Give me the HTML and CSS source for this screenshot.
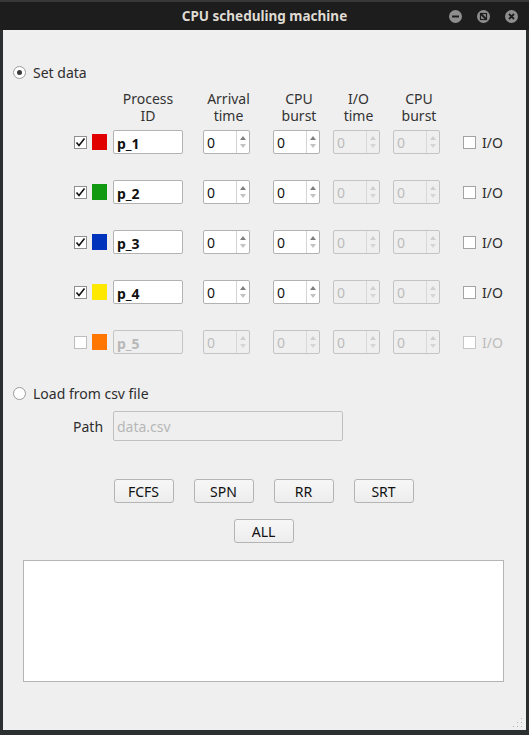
FILE: index.html
```html
<!DOCTYPE html>
<html>
<head>
<meta charset="utf-8">
<link rel="stylesheet" href="styles.css">
</head>
<body>
<div class="frame">
  <div class="titlebar">
    <span class="title">CPU scheduling machine</span>
    <div class="wbtns">
      <svg class="wbtn" width="13" height="13" viewBox="0 0 13 13"><circle cx="6.5" cy="6.5" r="6.5" fill="#8e8e8e"/><rect x="3" y="5.5" width="7" height="2" fill="#1e1e1e"/></svg>
      <svg class="wbtn" width="13" height="13" viewBox="0 0 13 13"><circle cx="6.5" cy="6.5" r="6.5" fill="#8e8e8e"/><rect x="3.5" y="3.5" width="6" height="6" fill="none" stroke="#1e1e1e" stroke-width="1.2"/><line x1="3.5" y1="3.5" x2="9.5" y2="9.5" stroke="#1e1e1e" stroke-width="2"/></svg>
      <svg class="wbtn" width="13" height="13" viewBox="0 0 13 13"><circle cx="6.5" cy="6.5" r="6.5" fill="#8e8e8e"/><path d="M4 4L9 9M9 4L4 9" stroke="#1e1e1e" stroke-width="1.8"/></svg>
    </div>
  </div>
  <div class="content">
    <label class="radio-row first">
      <span class="radio checked"></span><span>Set data</span>
    </label>

    <div class="table">
      <div class="thead">
        <div class="hd c3">Process<br>ID</div>
        <div class="hd c4">Arrival<br>time</div>
        <div class="hd c5">CPU<br>burst</div>
        <div class="hd c6">I/O<br>time</div>
        <div class="hd c7">CPU<br>burst</div>
      </div>

      <div class="trow">
        <span class="chk on"><svg width="11" height="11" viewBox="0 0 11 11"><path d="M1.5 5.5L4 8.5L9.5 1.5" fill="none" stroke="#111" stroke-width="1.6"/></svg></span>
        <span class="sw" style="background:#e00000"></span>
        <div class="field"><b>p_1</b></div>
        <div class="spin"><span class="val">0</span><span class="arr"><i class="up"></i><i class="dn"></i></span></div>
        <div class="spin"><span class="val">0</span><span class="arr"><i class="up"></i><i class="dn"></i></span></div>
        <div class="spin dis"><span class="val">0</span><span class="arr"><i class="up"></i><i class="dn"></i></span></div>
        <div class="spin dis"><span class="val">0</span><span class="arr"><i class="up"></i><i class="dn"></i></span></div>
        <label class="io"><span class="chk"></span>I/O</label>
      </div>

      <div class="trow">
        <span class="chk on"><svg width="11" height="11" viewBox="0 0 11 11"><path d="M1.5 5.5L4 8.5L9.5 1.5" fill="none" stroke="#111" stroke-width="1.6"/></svg></span>
        <span class="sw" style="background:#119a11"></span>
        <div class="field"><b>p_2</b></div>
        <div class="spin"><span class="val">0</span><span class="arr"><i class="up"></i><i class="dn"></i></span></div>
        <div class="spin"><span class="val">0</span><span class="arr"><i class="up"></i><i class="dn"></i></span></div>
        <div class="spin dis"><span class="val">0</span><span class="arr"><i class="up"></i><i class="dn"></i></span></div>
        <div class="spin dis"><span class="val">0</span><span class="arr"><i class="up"></i><i class="dn"></i></span></div>
        <label class="io"><span class="chk"></span>I/O</label>
      </div>

      <div class="trow">
        <span class="chk on"><svg width="11" height="11" viewBox="0 0 11 11"><path d="M1.5 5.5L4 8.5L9.5 1.5" fill="none" stroke="#111" stroke-width="1.6"/></svg></span>
        <span class="sw" style="background:#0033bb"></span>
        <div class="field"><b>p_3</b></div>
        <div class="spin"><span class="val">0</span><span class="arr"><i class="up"></i><i class="dn"></i></span></div>
        <div class="spin"><span class="val">0</span><span class="arr"><i class="up"></i><i class="dn"></i></span></div>
        <div class="spin dis"><span class="val">0</span><span class="arr"><i class="up"></i><i class="dn"></i></span></div>
        <div class="spin dis"><span class="val">0</span><span class="arr"><i class="up"></i><i class="dn"></i></span></div>
        <label class="io"><span class="chk"></span>I/O</label>
      </div>

      <div class="trow">
        <span class="chk on"><svg width="11" height="11" viewBox="0 0 11 11"><path d="M1.5 5.5L4 8.5L9.5 1.5" fill="none" stroke="#111" stroke-width="1.6"/></svg></span>
        <span class="sw" style="background:#ffe800"></span>
        <div class="field"><b>p_4</b></div>
        <div class="spin"><span class="val">0</span><span class="arr"><i class="up"></i><i class="dn"></i></span></div>
        <div class="spin"><span class="val">0</span><span class="arr"><i class="up"></i><i class="dn"></i></span></div>
        <div class="spin dis"><span class="val">0</span><span class="arr"><i class="up"></i><i class="dn"></i></span></div>
        <div class="spin dis"><span class="val">0</span><span class="arr"><i class="up"></i><i class="dn"></i></span></div>
        <label class="io"><span class="chk"></span>I/O</label>
      </div>

      <div class="trow">
        <span class="chk off"></span>
        <span class="sw" style="background:#ff7700"></span>
        <div class="field dis"><b>p_5</b></div>
        <div class="spin dis"><span class="val">0</span><span class="arr"><i class="up"></i><i class="dn"></i></span></div>
        <div class="spin dis"><span class="val">0</span><span class="arr"><i class="up"></i><i class="dn"></i></span></div>
        <div class="spin dis"><span class="val">0</span><span class="arr"><i class="up"></i><i class="dn"></i></span></div>
        <div class="spin dis"><span class="val">0</span><span class="arr"><i class="up"></i><i class="dn"></i></span></div>
        <label class="io dis"><span class="chk"></span>I/O</label>
      </div>
    </div>

    <label class="radio-row second">
      <span class="radio"></span><span>Load from csv file</span>
    </label>

    <div class="path-row">
      <span class="path-label">Path</span>
      <div class="path-input">data.csv</div>
    </div>

    <div class="btn-row algos">
      <button class="btn">FCFS</button>
      <button class="btn">SPN</button>
      <button class="btn">RR</button>
      <button class="btn">SRT</button>
    </div>
    <div class="btn-row all">
      <button class="btn">ALL</button>
    </div>

    <div class="output"></div>

    <svg class="grip" width="10" height="10" viewBox="0 0 10 10">
      <rect x="8" y="0" width="1" height="1" fill="#b5b5b5"/>
      <rect x="8" y="4" width="1" height="1" fill="#b5b5b5"/>
      <rect x="4" y="4" width="1" height="1" fill="#b5b5b5"/>
      <rect x="8" y="8" width="1" height="1" fill="#b5b5b5"/>
      <rect x="4" y="8" width="1" height="1" fill="#b5b5b5"/>
      <rect x="0" y="8" width="1" height="1" fill="#b5b5b5"/>
    </svg>
  </div>
</div>
</body>
</html>
```

FILE: styles.css
```css
* { box-sizing: border-box; }
html, body { margin: 0; padding: 0; }
body {
  width: 529px;
  height: 735px;
  background: #2c2f30;
  font-family: "Noto Sans", "Open Sans", sans-serif;
  font-size: 13px;
  color: #333;
  overflow: hidden;
}
.frame {
  width: 529px;
  height: 735px;
  display: flex;
  flex-direction: column;
}
.titlebar {
  height: 30px;
  flex: none;
  background: #1d1d1d;
  border-top: 2px solid #383838;
  display: flex;
  align-items: center;
  justify-content: center;
  position: relative;
}
.title {
  color: #dfdbd2;
  font-weight: bold;
  font-size: 13.5px;
  margin-top: -1px;
}
.wbtns {
  position: absolute;
  right: 11px;
  top: 8px;
  display: flex;
  gap: 15px;
}
.wbtn { display: block; }
.content {
  margin: 0 3px;
  height: 700px;
  background: #efefef;
  position: relative;
  display: flex;
  flex-direction: column;
  padding-top: 32px;
}
.radio-row {
  height: 20px;
  display: flex;
  align-items: center;
  gap: 7px;
  margin-left: 10px;
  font-size: 14px;
  color: #2e2e2e;
}
.radio {
  width: 13px;
  height: 13px;
  border-radius: 50%;
  border: 1px solid #9a9a9a;
  background: #fff;
  position: relative;
  flex: none;
}
.radio.checked::after {
  content: "";
  position: absolute;
  left: 3px;
  top: 3px;
  width: 5px;
  height: 5px;
  border-radius: 50%;
  background: #3a3a3a;
}
.table {
  margin-top: 8px;
  margin-left: 71px;
  display: flex;
  flex-direction: column;
  gap: 26px;
}
.thead, .trow {
  display: grid;
  grid-template-columns: 18px 21px 90px 70px 60px 60px 70px auto;
  align-items: center;
}
.thead {
  height: 34px;
  margin-bottom: -20px;
}
.trow { height: 24px; }
.hd {
  grid-row: 1;
  text-align: center;
  line-height: 17px;
  font-size: 14px;
  color: #333;
}
.hd.c3 { grid-column: 3; width: 70px; }
.hd.c4 { grid-column: 4; width: 51px; }
.hd.c5 { grid-column: 5; width: 52px; }
.hd.c6 { grid-column: 6; width: 51px; }
.hd.c7 { grid-column: 7; width: 52px; }
.chk {
  width: 13px;
  height: 13px;
  border: 1px solid #8f8f8f;
  background: #fff;
  display: flex;
  align-items: center;
  justify-content: center;
  flex: none;
}
.chk.off { border-color: #bdbdbd; }
.sw {
  width: 15px;
  height: 16px;
  display: block;
}
.field {
  width: 70px;
  height: 24px;
  border: 1px solid #b2b2b2;
  border-radius: 2px;
  background: #fff;
  padding-left: 3px;
  display: flex;
  align-items: center;
  font-size: 14px;
  color: #111;
  padding-top: 2px;
}
.field.dis {
  background: #efefef;
  border-color: #c4c4c4;
  color: #b8b8b8;
}
.spin {
  width: 47px;
  height: 24px;
  border: 1px solid #b2b2b2;
  border-radius: 2px;
  background: #fff;
  display: flex;
  font-size: 14px;
  color: #111;
}
.spin .val {
  flex: 1;
  display: flex;
  align-items: center;
  padding-left: 3px;
  padding-top: 1px;
}
.spin .arr {
  width: 13px;
  border-left: 1px solid #d4d4d4;
  display: flex;
  flex-direction: column;
  align-items: center;
  justify-content: center;
  gap: 4px;
}
.spin .arr i {
  display: block;
  width: 0;
  height: 0;
  border-left: 3.5px solid transparent;
  border-right: 3.5px solid transparent;
}
.spin .arr .up { border-bottom: 4px solid #7f7f7f; }
.spin .arr .dn { border-top: 4px solid #c2c2c2; }
.spin.dis {
  background: #efefef;
  border-color: #c4c4c4;
  color: #bcbcbc;
}
.spin.dis .arr { border-left-color: #d8d8d8; }
.spin.dis .arr .up { border-bottom-color: #cfcfcf; }
.spin.dis .arr .dn { border-top-color: #d6d6d6; }
.io {
  display: flex;
  align-items: center;
  gap: 6px;
  font-size: 14px;
  color: #2e2e2e;
}
.io .chk { border-color: #a3a3a3; }
.io.dis { color: #bcbcbc; }
.io.dis .chk { border-color: #c6c6c6; }
.radio-row.second { margin-top: 29px; }
.path-row {
  margin-top: 8px;
  margin-left: 70px;
  display: flex;
  align-items: center;
  height: 30px;
}
.path-label {
  width: 40px;
  font-size: 14px;
  color: #2e2e2e;
}
.path-input {
  width: 230px;
  height: 30px;
  border: 1px solid #c0c0c0;
  border-radius: 2px;
  background: #efefef;
  color: #b7b7b7;
  font-size: 14px;
  padding-left: 3px;
  display: flex;
  align-items: center;
}
.btn-row {
  display: flex;
  justify-content: center;
  gap: 20px;
  padding-right: 2px;
}
.btn-row.algos { margin-top: 38px; }
.btn-row.all { margin-top: 16px; }
.btn {
  width: 60px;
  height: 24px;
  border: 1px solid #b4b4b4;
  border-radius: 3px;
  background: linear-gradient(#f7f7f7, #ededed);
  font-family: "Noto Sans", "Open Sans", sans-serif;
  font-size: 14px;
  color: #111;
  padding: 0;
  margin: 0;
}
.output {
  margin-top: 17px;
  margin-left: 20px;
  width: 481px;
  height: 122px;
  border: 1px solid #b5b5b5;
  background: #fff;
}
.grip {
  position: absolute;
  right: 3px;
  bottom: 2px;
}
```
